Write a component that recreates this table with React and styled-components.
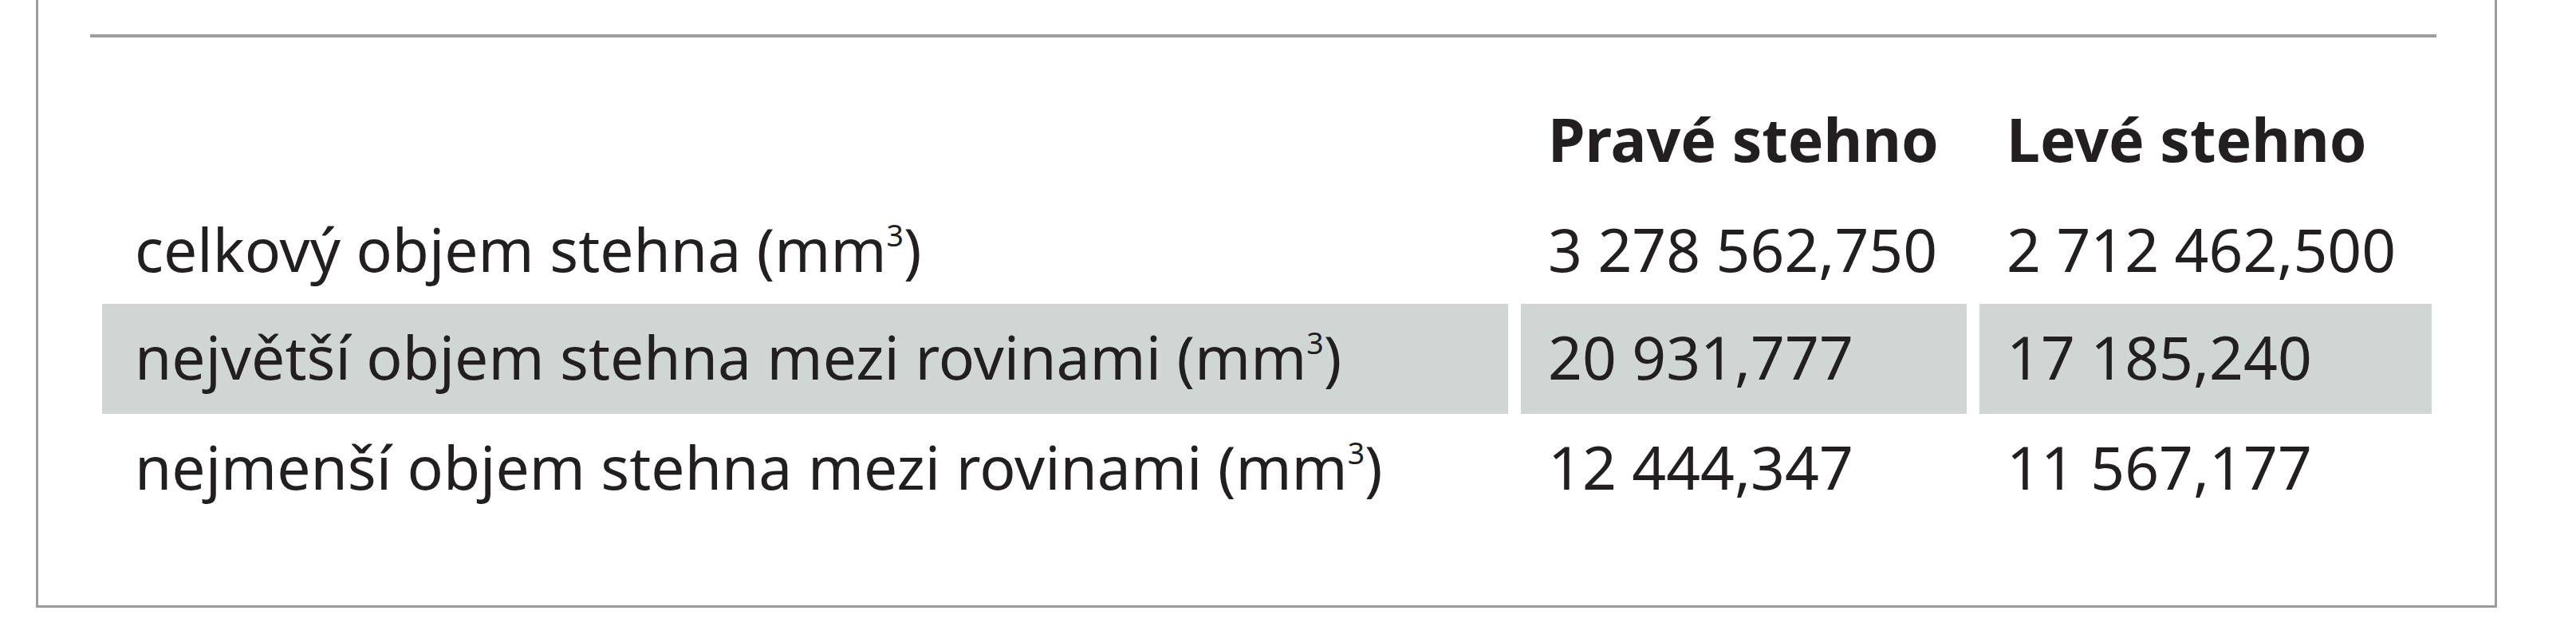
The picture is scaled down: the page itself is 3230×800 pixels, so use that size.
import styled, { createGlobalStyle } from "styled-components";

const rows = [
  { label: "celkový objem stehna", right: "3 278 562,750", left: "2 712 462,500" },
  { label: "největší objem stehna mezi rovinami", right: "20 931,777", left: "17 185,240", shaded: true },
  { label: "nejmenší objem stehna mezi rovinami", right: "12 444,347", left: "11 567,177" },
];

function App() {
  return (
    <>
      <GlobalStyle />
      <S.Frame>
        <S.Rule />
        <S.Table>
          <S.Cell />
          <S.Cell $num $head>Pravé stehno</S.Cell>
          <S.Cell $num $head>Levé stehno</S.Cell>
          {rows.map((row) => (
            <S.Row key={row.label}>
              <S.Cell $shaded={row.shaded}>
                {row.label} (mm<S.Sup>3</S.Sup>)
              </S.Cell>
              <S.Cell $num $shaded={row.shaded}>
                {row.right}
              </S.Cell>
              <S.Cell $num $shaded={row.shaded}>
                {row.left}
              </S.Cell>
            </S.Row>
          ))}
        </S.Table>
      </S.Frame>
    </>
  );
}

export default App;

const GlobalStyle = createGlobalStyle`
  body {
    margin: 0;
    background: #ffffff;
    font-family: "Noto Sans", "Open Sans", sans-serif;
  }
`;

const S = {
  Frame: styled.section`
    box-sizing: border-box;
    width: 3086px;
    height: 762px;
    margin-left: 45px;
    padding: 43px 73px 0 65px;
    border: 3px solid #9b9b9b;
    border-top: none;
  `,
  Rule: styled.hr`
    height: 4px;
    margin: 0;
    border: 0;
    background: #9e9e9e;
  `,
  Table: styled.div`
    display: grid;
    grid-template-columns: 1763px 559px 567px;
    grid-template-rows: 138px 135px 138px 138px;
    column-gap: 16px;
    margin: 61px 0 0 15px;
  `,
  Row: styled.div`
    display: contents;
  `,
  Cell: styled.div`
    box-sizing: border-box;
    padding: 29px 0 0 ${(p) => (p.$num ? "34px" : "41px")};
    font-size: 75px;
    line-height: 75px;
    font-weight: ${(p) => (p.$head ? 700 : 400)};
    color: #231f20;
    white-space: nowrap;
    background: ${(p) => (p.$shaded ? "#cfd6d4" : "transparent")};
  `,
  Sup: styled.span`
    font-size: 0.5em;
    line-height: 0;
    vertical-align: 0.85em;
  `,
};
